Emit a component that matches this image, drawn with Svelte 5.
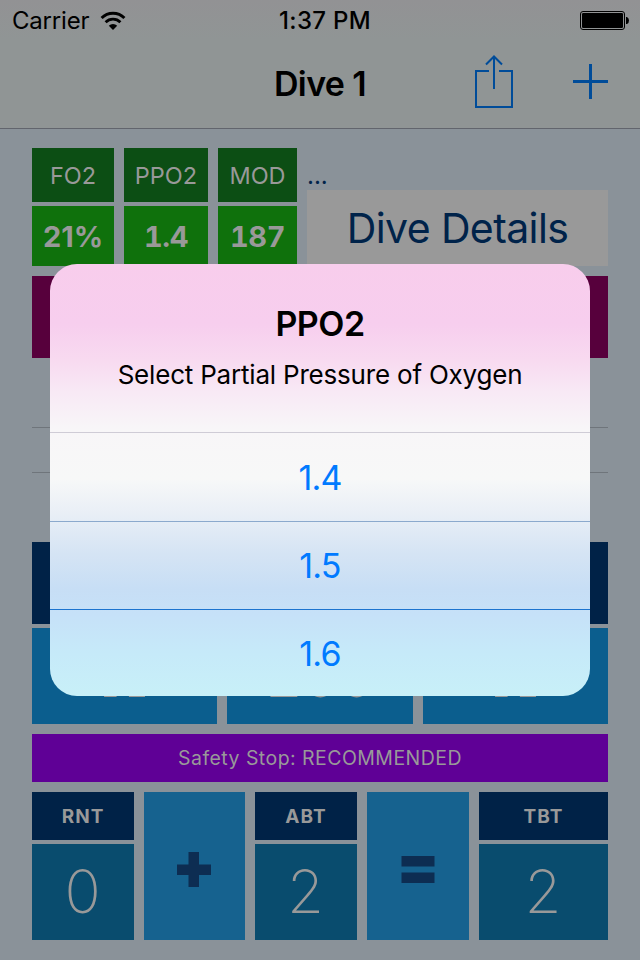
<script>
  const gases = [
    { label: "FO2", value: "21%" },
    { label: "PPO2", value: "1.4" },
    { label: "MOD", value: "187" }
  ];

  const groups = ["A", "200", "A"];

  const options = ["1.4", "1.5", "1.6"];
</script>

<div class="screen">
  <header>
    <div class="status">
      <span class="carrier">
        Carrier
        <svg class="wifi" width="26" height="20" viewBox="0 0 26 20">
          <path d="M1.6 7 A16.2 16.2 0 0 1 24.4 7" fill="none" stroke="#000" stroke-width="3" />
          <path d="M5.6 11.2 A10.6 10.6 0 0 1 20.4 11.2" fill="none" stroke="#000" stroke-width="2.8" />
          <path d="M8.8 14.8 A6 6 0 0 1 17.2 14.8 L13 19 Z" />
        </svg>
      </span>
      <span class="time">1:37 PM</span>
      <svg class="battery" width="50" height="20" viewBox="0 0 50 20">
        <rect x="0.5" y="0.5" width="44" height="18" rx="2.5" fill="none" stroke="#000" />
        <rect x="2" y="2" width="41" height="15" rx="1.2" />
        <path d="M46 6 h1 q2 1 2 3.5 t-2 3.5 h-1 z" />
      </svg>
    </div>
    <div class="nav">
      <h1>Dive 1</h1>
      <div class="actions">
        <svg width="38" height="53" viewBox="0 0 38 53">
          <path d="M14 16 H1 V52 H37 V16 H24 M19 34 V2 M11 9.5 L19 1.5 L27 9.5" fill="none" stroke="#004c99" stroke-width="2" />
        </svg>
        <svg width="35" height="35" viewBox="0 0 35 35">
          <path d="M17.5 0 V35 M0 17.5 H35" stroke="#004c99" stroke-width="3" />
        </svg>
      </div>
    </div>
  </header>

  <main>
    <section class="gas">
      {#each gases as gas}
      <div class="stack">
        <div class="gas-label">{gas.label}</div>
        <div class="gas-value" class:percent={gas.value.endsWith("%")}>{gas.value}</div>
      </div>
      {/each}
      <div class="details">
        <span class="dots">...</span>
        <button>Dive Details</button>
      </div>
    </section>

    <div class="depth"></div>
    <div class="picker"></div>
    <div class="heading"></div>

    <section class="groups">
      {#each groups as group}
      <div class:letter={isNaN(group)}>{group}</div>
      {/each}
    </section>

    <div class="safety">Safety Stop: RECOMMENDED</div>

    <section class="totals">
      <div class="stack">
        <div class="label">RNT</div>
        <div class="value">0</div>
      </div>
      <div class="operator plus">
        <svg width="34" height="35" viewBox="0 0 34 35">
          <path d="M11.5 0 H22 V12.5 H34 V23 H22 V35 H11.5 V23 H0 V12.5 H11.5 Z" />
        </svg>
      </div>
      <div class="stack">
        <div class="label">ABT</div>
        <div class="value">2</div>
      </div>
      <div class="operator">
        <svg width="34" height="35" viewBox="0 0 34 35">
          <path d="M0.5 4 H33.5 V14.5 H0.5 Z M0.5 20.5 H33.5 V31 H0.5 Z" />
        </svg>
      </div>
      <div class="stack">
        <div class="label">TBT</div>
        <div class="value">2</div>
      </div>
    </section>
  </main>

  <div class="alert" role="dialog" aria-labelledby="alert-title">
    <div class="message">
      <h2 id="alert-title">PPO2</h2>
      <p>Select Partial Pressure of Oxygen</p>
    </div>
    {#each options as option}
    <button>{option}</button>
    {/each}
  </div>
</div>

<style>
  :global(body) {
    background: #8a9299;
  }

  .screen {
    position: relative;
    width: 640px;
    height: 960px;
    overflow: hidden;
    background: #8a9299;
    font-family: Inter, "Liberation Sans", sans-serif;
  }

  h1,
  h2,
  p {
    margin: 0;
  }

  button {
    padding: 0;
    border: 0;
    font-family: inherit;
  }

  svg {
    display: block;
  }

  header {
    box-sizing: border-box;
    height: 129px;
    border-bottom: 1px solid #62656d;
    background: linear-gradient(#929294, #909595 40px, #909595);
  }

  .status {
    display: grid;
    grid-template-columns: 1fr auto 1fr;
    align-items: center;
    height: 40px;
    padding: 1px 10px 0 12px;
    box-sizing: border-box;
    font-size: 24px;
    line-height: 39px;
  }

  .carrier {
    display: flex;
    gap: 11px;
    align-items: center;
    letter-spacing: -0.2px;
  }

  .time {
    padding-left: 8px;
    font-weight: 500;
    letter-spacing: 0.3px;
  }

  .battery {
    justify-self: end;
  }

  .nav {
    display: grid;
    grid-template-columns: 1fr auto 1fr;
    height: 88px;
    padding: 0 32px;
  }

  h1 {
    grid-column: 2;
    font-size: 34px;
    font-weight: 600;
    line-height: 88px;
    letter-spacing: -0.6px;
  }

  .actions {
    display: flex;
    gap: 60px;
    justify-content: flex-end;
    padding-top: 15px;
  }

  .actions svg:last-child {
    margin-top: 9px;
  }

  main {
    padding: 19px 32px 0;
    color: #999;
  }

  .gas {
    display: grid;
    grid-template-columns: 82px 84px 79px 301px;
    gap: 10px;
    height: 118px;
    text-align: center;
  }

  .stack {
    display: flex;
    flex-direction: column;
    gap: 4px;
  }

  .gas-label {
    height: 54px;
    background: #0c4e14;
    font-size: 23.5px;
    font-weight: 400;
    line-height: 56px;
    letter-spacing: 0;
  }

  .gas-value {
    height: 60px;
    background: #0f710c;
    font-size: 29px;
    font-weight: 700;
    line-height: 62px;
    font-variant-numeric: tabular-nums;
    letter-spacing: -0.4px;
  }

  .percent {
    font-variant-numeric: normal;
    letter-spacing: 0;
  }

  .details {
    display: flex;
    flex-direction: column;
    text-align: left;
  }

  .dots {
    height: 42px;
    color: #00234a;
    font-size: 24px;
    line-height: 56px;
  }

  .details button {
    height: 76px;
    background: #999;
    color: #00234a;
    font-size: 41px;
    line-height: 77px;
    letter-spacing: -0.6px;
  }

  .depth {
    height: 82px;
    margin-top: 10px;
    background: #57003c;
  }

  .picker {
    box-sizing: border-box;
    height: 46px;
    margin: 69px 0;
    border: 1px solid #6f757b;
    border-width: 1px 0;
  }

  .heading {
    height: 82px;
    background: #002247;
  }

  .groups {
    display: grid;
    grid-template-columns: 185px 186px 185px;
    grid-template-rows: 96px;
    gap: 10px;
    height: 96px;
    margin-top: 4px;
    font-size: 60px;
    font-weight: 200;
    line-height: 94px;
    text-align: center;
  }

  .groups div {
    background: #0b5e8e;
  }

  .groups .letter {
    font-family: "Liberation Serif", serif;
    font-size: 58px;
    line-height: 100px;
  }

  .safety {
    height: 48px;
    margin: 10px 0;
    background: #5f0096;
    font-size: 19.5px;
    font-weight: 400;
    line-height: 49px;
    letter-spacing: 0.45px;
    text-align: center;
  }

  .totals {
    display: grid;
    grid-template-columns: 102px 101px 102px 102px 129px;
    gap: 10px;
    height: 148px;
    text-align: center;
  }

  .label {
    height: 48px;
    background: #002247;
    font-size: 19px;
    font-weight: 700;
    line-height: 49px;
    letter-spacing: 1px;
  }

  .value {
    height: 96px;
    background: #094c6e;
    font-size: 60px;
    font-weight: 200;
    line-height: 95px;
    letter-spacing: 1px;
  }

  .operator {
    display: flex;
    align-items: center;
    justify-content: center;
    padding-top: 7px;
    background: #16628f;
    fill: #0d2d52;
  }

  .plus {
    padding-right: 2px;
  }

  .alert {
    position: absolute;
    top: 264px;
    left: 50px;
    width: 540px;
    height: 432px;
    overflow: hidden;
    border-radius: 27px;
    background: linear-gradient(
      #f8cdec 0,
      #f7ceee 60px,
      #f8daf0 96px,
      #f8e9f5 128px,
      #f8f6f8 165px,
      #f7f8f8 215px,
      #e8eef6 252px,
      #d5e4f4 290px,
      #c7def5 325px,
      #c6e1f8 350px,
      #c6eaf9 390px,
      #c8f0f8 432px
    );
    color: #000;
    text-align: center;
  }

  .message {
    height: 168px;
  }

  h2 {
    padding-top: 40px;
    font-size: 34px;
    font-weight: 600;
    line-height: 40px;
    letter-spacing: -0.5px;
  }

  p {
    padding-top: 13px;
    font-size: 26px;
    line-height: 36px;
    letter-spacing: -0.2px;
  }

  .alert button {
    box-sizing: border-box;
    display: block;
    width: 100%;
    height: 88px;
    border-top: 1px solid #cfccd6;
    background: none;
    color: #007aff;
    font-size: 34px;
    line-height: 87px;
    letter-spacing: -0.8px;
  }

  .alert button:nth-of-type(1) {
    height: 89px;
  }

  .alert button:nth-of-type(2) {
    border-color: #8ba9cd;
  }

  .alert button:nth-of-type(3) {
    border-color: #1c74cf;
  }
</style>
